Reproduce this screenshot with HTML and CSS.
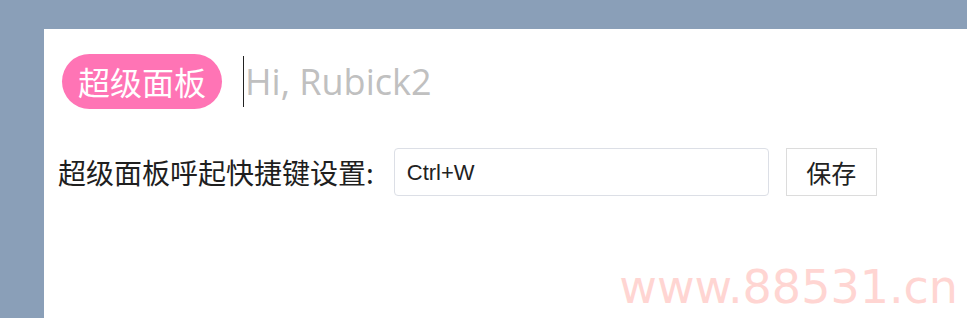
FILE: index.html
```html
<!DOCTYPE html>
<html lang="zh-CN">
<head>
    <meta charset="UTF-8">
    <meta name="viewport" content="width=device-width, initial-scale=1.0">
    <title>超级面板</title>
    <link rel="stylesheet" href="styles.css">
</head>
<body>
    <div class="window">
        <div class="search-bar">
            <span class="tag">超级面板</span>
            <div class="search">
                <span class="caret"></span>
                <input class="search-input" type="text" placeholder="Hi, Rubick2">
            </div>
        </div>

        <div class="setting-row">
            <label class="setting-label" for="shortcut">超级面板呼起快捷键设置:</label>
            <input class="shortcut-input" type="text" id="shortcut" value="Ctrl+W">
            <button class="save-btn">保存</button>
        </div>
    </div>

    <div class="watermark">www.88531.cn</div>
</body>
</html>
```

FILE: styles.css
```css
body {
    margin: 0;
    padding: 0;
    height: 318px;
    overflow: hidden;
    background-color: #8a9fb8;
    font-family: "Noto Sans CJK SC", sans-serif;
}
.window {
    margin: 29px 0 0 44px;
    height: 289px;
    padding: 25px 0 0 14px;
    box-sizing: border-box;
    background-color: #fff;
}
.search-bar {
    display: flex;
    align-items: center;
    height: 55px;
    margin-left: 4px;
}
.tag {
    height: 55px;
    line-height: 55px;
    padding: 0 16px;
    border-radius: 28px;
    background-color: #ff74b5;
    color: #fff;
    font-size: 32px;
}
.search {
    display: flex;
    align-items: center;
    margin-left: 21px;
}
.caret {
    width: 1px;
    height: 51px;
    background-color: #222;
}
.search-input {
    width: 600px;
    border: none;
    outline: none;
    padding: 0 0 0 1px;
    font-family: "Open Sans", sans-serif;
    font-size: 36px;
    color: #333;
    background: transparent;
}
.search-input::placeholder {
    color: #c0c0c0;
}
.setting-row {
    display: flex;
    align-items: center;
    margin-top: 39px;
}
.setting-label {
    font-size: 28px;
    color: #1f1f1f;
    margin-right: 20px;
}
.shortcut-input {
    width: 375px;
    height: 48px;
    box-sizing: border-box;
    padding: 2px 12px 0;
    border: 1px solid #dcdfe6;
    border-radius: 4px;
    outline: none;
    font-family: "Liberation Sans", Arial, sans-serif;
    font-size: 22px;
    color: #222;
}
.save-btn {
    width: 91px;
    height: 48px;
    margin-left: 17px;
    border: 1px solid #dcdcdc;
    background-color: #fff;
    font-family: "Noto Sans CJK SC", sans-serif;
    font-size: 25px;
    color: #222;
    cursor: pointer;
}
.watermark {
    position: absolute;
    top: 264px;
    right: 9px;
    font-family: "DejaVu Sans", Verdana, sans-serif;
    font-size: 46px;
    line-height: 46px;
    color: #ffd5d2;
}
```
